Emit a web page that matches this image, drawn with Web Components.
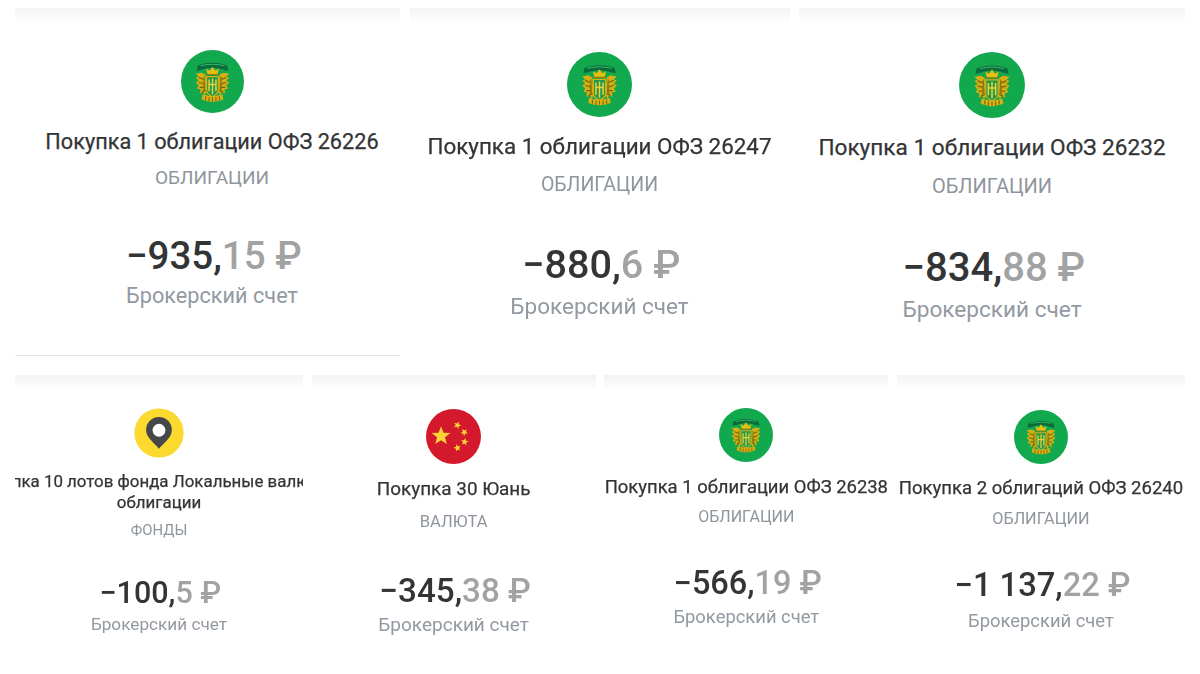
<!DOCTYPE html>
<html lang="ru">
<head>
<meta charset="utf-8">
<title>Покупки</title>
<style>
  html, body { margin: 0; height: 100%; background: #fff; overflow: hidden; }
  body { font-family: Roboto, "Noto Sans", sans-serif; }
</style>
</head>
<body>
<template id="emblem-tpl">
  <style>
    :host { display: block; flex: none; width: var(--icon); height: var(--icon); }
    svg { display: block; width: 100%; height: 100%; }
  </style>
  <svg viewBox="0 0 64 64"></svg>
</template>

<stat-page>
  <stat-row style="--row-h:367px">
    <stat-card divider style="--w:385px;--shift:9px;--top:41.5px;--icon:63px;--t:21.7px;--tl:28px;--c:19px;--a:38.5px;--b:21.7px;--g1:15px;--g2:11px;--g3:43.5px;--g4:3.8px" kind="bank" cat="ОБЛИГАЦИИ" whole="−935," frac="15 ₽" acct="Брокерский счет">Покупка 1 облигации ОФЗ 26226</stat-card>
    <stat-card style="--w:380px;--top:44px;--icon:65px;--t:22.4px;--tl:28px;--c:19.5px;--a:39.6px;--b:22.5px;--g1:15px;--g2:12.5px;--g3:45.6px;--g4:4.4px" kind="bank" cat="ОБЛИГАЦИИ" whole="−880," frac="6 ₽" acct="Брокерский счет">Покупка 1 облигации ОФЗ 26247</stat-card>
    <stat-card style="--w:386px;--top:43.5px;--icon:66px;--t:22.6px;--tl:28px;--c:20px;--a:40px;--b:22.6px;--g1:16px;--g2:12.5px;--g3:46px;--g4:3.8px" kind="bank" cat="ОБЛИГАЦИИ" whole="−834," frac="88 ₽" acct="Брокерский счет">Покупка 1 облигации ОФЗ 26232</stat-card>
  </stat-row>
  <stat-row style="--row-h:299px">
    <stat-card style="--w:288px;--top:33px;--icon:50px;--t:16.9px;--tl:21px;--c:14.9px;--a:30.5px;--b:17.2px;--g1:13px;--g2:9px;--g3:34.8px;--g4:2.6px" kind="pin" cat="ФОНДЫ" whole="−100," frac="5 ₽" acct="Брокерский счет">Покупка 10 лотов фонда Локальные валюты и<br>облигации</stat-card>
    <stat-card style="--w:284px;--top:34px;--icon:55px;--t:18.9px;--tl:22px;--c:16.6px;--a:33.2px;--b:19px;--g1:14px;--g2:12px;--g3:39.2px;--g4:2.8px" kind="flag" cat="ВАЛЮТА" whole="−345," frac="38 ₽" acct="Брокерский счет">Покупка 30 Юань</stat-card>
    <stat-card style="--w:284px;--top:33px;--icon:54px;--t:18.45px;--tl:22px;--c:16px;--a:32.5px;--b:18.4px;--g1:14px;--g2:9px;--g3:37.7px;--g4:3.5px" kind="bank" cat="ОБЛИГАЦИИ" whole="−566," frac="19 ₽" acct="Брокерский счет">Покупка 1 облигации ОФЗ 26238</stat-card>
    <stat-card style="--w:288px;--top:35px;--icon:54px;--t:18.5px;--tl:22px;--c:16.2px;--a:32.7px;--b:18.4px;--g1:13px;--g2:10px;--g3:37.5px;--g4:4.4px" kind="bank" cat="ОБЛИГАЦИИ" whole="−1 137," frac="22 ₽" acct="Брокерский счет">Покупка 2 облигаций ОФЗ 26240</stat-card>
  </stat-row>
</stat-page>

<script>
// five pointed star, used by the flag icon
function star(cx, cy, R, rot = 0) {
  let pts = [];
  for (let i = 0; i < 10; i++) {
    let r = i % 2 ? R * 0.42 : R;
    let t = (rot - 90 + i * 36) * Math.PI / 180;
    pts.push((cx + r * Math.cos(t)).toFixed(2) + ',' + (cy + r * Math.sin(t)).toFixed(2));
  }
  return `<polygon points="${pts.join(' ')}" fill="#fbd435"/>`;
}

const WING = `
  <path d="M25 25l-4-2-6 1 3 3-3 1 3 3-3 2 3 3-2 3 4 1-1 4 4-1 1 3 2-3z" fill="#d9ae12"/>
  <path d="M18 28l5 2M18 33l5 1M19 38l5 0M21 43l4-2" stroke="#6a6412" stroke-width="1.2" fill="none"/>
  <path d="M24 26l-2 3 1 3-1 3 1 3-1 3 3 1z" fill="#8d7d10"/>`;

const ICONS = {
  bank: `
    <circle cx="32" cy="32" r="32" fill="#12a84e"/>
    <path d="M17 16c4-2 9-3 15-3s11 1 15 3l1 5-5-1c-3-1-7-2-11-2s-8 1-11 2l-5 1z" fill="#0b6b3a"/>
    <path d="M20 16c4-1 8-1.500 12-1.500s8 .5 12 1.500" fill="none" stroke="#37bb6a" stroke-width="1"/>
    <path d="M27 25l-1.500-6 3.500 2 3-4 3 4 3.500-2-1.500 6z" fill="#e8bd12"/>
    <path d="M26 25h12" stroke="#8d7d10" stroke-width="1.200"/>
    ${WING}
    <g transform="matrix(-1 0 0 1 64 0)">${WING}</g>
    <path d="M26 27h12v14c0 3-3 5-6 6.500-3-1.500-6-3.500-6-6.500z" fill="#1d9a4b"/>
    <path d="M26 27h12v14c0 3-3 5-6 6.500-3-1.500-6-3.500-6-6.500z" fill="none" stroke="#d9b016" stroke-width="1.200"/>
    <path d="M28.500 30v12M32 29v16M35.500 30v12M28 35h8" stroke="#eed13c" stroke-width="1.500"/>
    <path d="M22 45c3 1 6 2 10 2s7-1 10-2l1 5c-3 1.500-7 2.500-11 2.500S24 51.500 21 50z" fill="#dcb012"/>
    <path d="M25 47v4M28.500 48v4M32 48v4M35.500 48v4M39 47v4" stroke="#6d6a12" stroke-width="1.100"/>`,
  pin: `
    <circle cx="32" cy="32" r="31.500" fill="#fbd92f"/>
    <path d="M32 11.500c-9.500 0-16.500 7.300-16.500 16.500 0 10 10.500 16.500 16.500 24 6-7.500 16.500-14 16.500-24 0-9.200-7-16.500-16.500-16.500z" fill="#45474a"/>
    <circle cx="32" cy="28.500" r="8.200" fill="#fff"/>`,
  flag: `
    <circle cx="32" cy="32" r="32" fill="#d5192c"/>
    ${star(17.5, 31.5, 11.5)}
    ${star(36.5, 18.8, 4.6, 20)}
    ${star(44.6, 27, 4.6, 40)}
    ${star(45, 38.2, 4.6, 10)}
    ${star(36.5, 45.2, 4.6, -15)}`
};

class RoundIcon extends HTMLElement {
  constructor() {
    super();
    this.attachShadow({ mode: 'open' });
    this.shadowRoot.append(document.getElementById('emblem-tpl').content.cloneNode(true));
  }
  connectedCallback() {
    this.shadowRoot.querySelector('svg').innerHTML = ICONS[this.getAttribute('kind')] || '';
  }
}

class StatCard extends HTMLElement {
  constructor() {
    super();
    this.attachShadow({ mode: 'open' });
  }
  connectedCallback() {
    const a = n => this.getAttribute(n) || '';
    this.shadowRoot.innerHTML = `
      <style>
        :host {
          display: flex;
          flex: 0 0 var(--w);
          width: var(--w);
          height: 100%;
          box-sizing: border-box;
          flex-direction: column;
          align-items: center;
          overflow: hidden;
          padding: var(--top) 0 0 var(--shift, 0px);
          background: linear-gradient(#f3f3f3, #fff 15px);
          color: #333436;
          text-align: center;
        }
        .title {
          flex: none;
          white-space: nowrap;
          margin-top: var(--g1);
          font-size: var(--t);
          line-height: var(--tl);
          -webkit-text-stroke: 0.25px #333436;
        }
        .cat {
          flex: none;
          margin-top: var(--g2);
          font-size: var(--c);
          line-height: 1.2;
          color: #8f959d;
        }
        .sum {
          flex: none;
          margin-top: var(--g3);
          padding-left: 0.09em;
          font-size: var(--a);
          line-height: 1.2;
          font-weight: 500;
          white-space: nowrap;
        }
        .sum span { color: #a2a2a2; }
        .acct {
          flex: none;
          margin-top: var(--g4);
          font-size: var(--b);
          line-height: 1.2;
          color: #9399a1;
        }
        .rule { display: none; }
        :host([divider]) .rule {
          display: block;
          align-self: stretch;
          margin: auto 0 19px calc(0px - var(--shift, 0px));
          height: 1px;
          background: #e6e6e6;
        }
      </style>
      <round-icon kind="${a('kind')}"></round-icon>
      <div class="title"><slot></slot></div>
      <div class="cat">${a('cat')}</div>
      <div class="sum">${a('whole')}<span>${a('frac')}</span></div>
      <div class="acct">${a('acct')}</div>
      <div class="rule"></div>`;
  }
}

class StatRow extends HTMLElement {
  constructor() {
    super();
    this.attachShadow({ mode: 'open' });
    this.shadowRoot.innerHTML = `
      <style>
        :host {
          display: flex;
          justify-content: space-between;
          height: var(--row-h);
          margin-left: 15px;
          width: 1170px;
        }
      </style>
      <slot></slot>`;
  }
}

class StatPage extends HTMLElement {
  constructor() {
    super();
    this.attachShadow({ mode: 'open' });
    this.shadowRoot.innerHTML = `
      <style>
        :host { display: block; padding-top: 8px; filter: blur(0.35px); }
      </style>
      <slot></slot>`;
  }
}

customElements.define('round-icon', RoundIcon);
customElements.define('stat-card', StatCard);
customElements.define('stat-row', StatRow);
customElements.define('stat-page', StatPage);
</script>
</body>
</html>
